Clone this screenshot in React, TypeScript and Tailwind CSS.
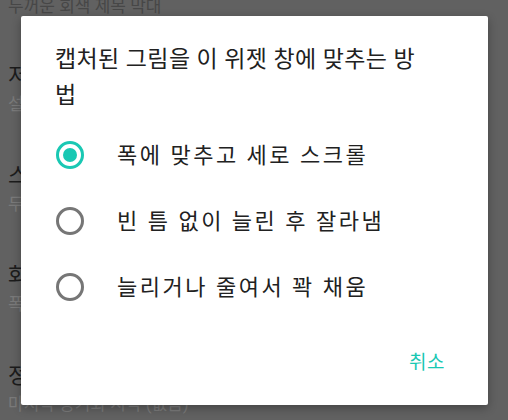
import { useState } from "react";

const bgItems = [
  { title: "저장 위치", sub: "설정된 폴더에 저장" },
  { title: "스타일", sub: "두꺼운 회색 제목 막대" },
  { title: "화면 맞춤", sub: "폭에 맞추고 세로 스크롤" },
  { title: "정보", sub: "마지막 동기화 시각 (없음)" },
];

const options = [
  "폭에 맞추고 세로 스크롤",
  "빈 틈 없이 늘린 후 잘라냄",
  "늘리거나 줄여서 꽉 채움",
];

function Radio({ checked }: { checked: boolean }) {
  return checked ? (
    <span className="shrink-0 w-[28px] h-[28px] rounded-full border-[3px] border-[#19c8b3] flex items-center justify-center">
      <span className="w-[14px] h-[14px] rounded-full bg-[#19c8b3]" />
    </span>
  ) : (
    <span className="shrink-0 w-[28px] h-[28px] rounded-full border-[3px] border-[#767676]" />
  );
}

export default function App() {
  const [selected, setSelected] = useState(0);

  return (
    <div
      className="relative w-[508px] h-[420px] overflow-hidden bg-[#616161]"
      style={{ fontFamily: "Roboto, 'Noto Sans CJK KR', sans-serif" }}
    >
      {/* dimmed settings list behind the dialog */}
      <div className="flex flex-col px-[8px]">
        <p className="-mt-[6px] text-[17px] leading-[24px] text-[#474747]">두꺼운 회색 제목 막대</p>
        {bgItems.map((it, i) => (
          <div key={i} className={`flex flex-col ${i === 0 ? "pt-[43px]" : "pt-[44px]"}`}>
            <p className="text-[22px] leading-[30px] text-[#1c1c1c]">{it.title}</p>
            <p className="text-[17px] leading-[26px] text-[#7a7a7a]">{it.sub}</p>
          </div>
        ))}
      </div>

      {/* dialog */}
      <div className="absolute left-[21px] top-[16px] w-[467px] h-[389px] bg-white rounded-[2px] shadow-[0_3px_10px_rgba(0,0,0,0.3)] flex flex-col">
        <h2 className="pt-[26px] pl-[34px] pr-[24px] text-[23px] leading-[36px] tracking-[0.4px] text-[#212121]">
          캡처된 그림을 이 위젯 창에 맞추는 방<br />법
        </h2>
        <div className="flex flex-col pt-[8px]">
          {options.map((o, i) => (
            <button
              key={i}
              onClick={() => setSelected(i)}
              className="flex items-center h-[66px] pl-[35px] text-left"
            >
              <Radio checked={selected === i} />
              <span className="ml-[33px] text-[22px] tracking-[2.5px] text-[#212121]">{o}</span>
            </button>
          ))}
        </div>
        <div className="flex justify-end mt-auto pb-[30px] pr-[43px]">
          <button className="text-[19px] leading-[24px] tracking-[0.5px] text-[#19c8b3]">취소</button>
        </div>
      </div>
    </div>
  );
}
